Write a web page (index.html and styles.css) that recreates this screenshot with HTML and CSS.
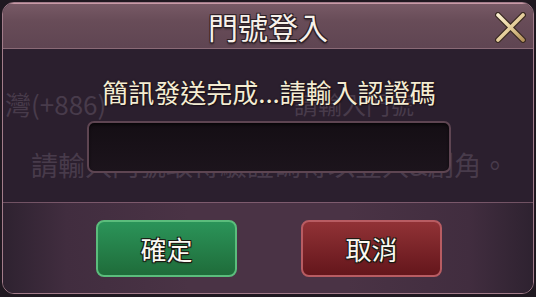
FILE: index.html
```html
<!DOCTYPE html>
<html lang="zh-Hant">
<head>
    <meta charset="UTF-8">
    <meta name="viewport" content="width=device-width, initial-scale=1.0">
    <title>門號登入</title>
    <link rel="stylesheet" href="styles.css">
</head>
<body>
    <div class="dialog">
        <div class="dialog-head">
            <span class="dialog-title">門號登入</span>
            <div class="close-btn">
                <svg width="31" height="31" viewBox="0 0 31 31">
                    <defs>
                        <linearGradient id="xg" x1="0" y1="0" x2="1" y2="1">
                            <stop offset="0" stop-color="#fbf0cf"/>
                            <stop offset="0.5" stop-color="#e6cf9c"/>
                            <stop offset="1" stop-color="#b7955c"/>
                        </linearGradient>
                    </defs>
                    <path d="M3 3 L28 28 M28 3 L3 28" stroke="#3a2a22" stroke-width="6" stroke-linecap="round"/>
                    <path d="M3 3 L28 28 M28 3 L3 28" stroke="url(#xg)" stroke-width="3.6" stroke-linecap="round"/>
                </svg>
            </div>
        </div>
        <div class="dialog-body">
            <div class="ghost">
                <span class="ghost-code">台灣(+886)</span>
                <span class="ghost-phone">請輸入門號</span>
                <span class="ghost-hint">請輸入門號取得驗證碼得以登入&amp;創角。</span>
            </div>
            <div class="message">簡訊發送完成...請輸入認證碼</div>
            <input class="code-input" type="text">
        </div>
        <div class="dialog-foot">
            <button class="btn btn-ok">確定</button>
            <button class="btn btn-cancel">取消</button>
        </div>
    </div>
</body>
</html>
```
FILE: styles.css
```css
body {
    margin: 0;
    width: 536px; height: 297px;
    background: #1f1820;
    font-family: "Noto Sans CJK TC", "Noto Sans", sans-serif;
    overflow: hidden;
}
.dialog {
    margin: 2px;
    width: 530px; height: 290px;
    border: 1px solid #a27c8a;
    border-radius: 12px;
    overflow: hidden;
    display: flex; flex-direction: column;
}
.dialog-head {
    height: 45px;
    position: relative;
    display: flex; align-items: center; justify-content: center;
    background: linear-gradient(180deg, #785a66, #684c58 40%, #5f4552);
    border-bottom: 1px solid #8a6a76;
    box-shadow: inset 0 1px 0 #c89aa6;
}
.dialog-title {
    font-size: 30px; line-height: 34px;
    color: #f7f1ea;
    margin-top: 1px;
    text-shadow: -1px -1px 0 #2d2026, 1px -1px 0 #2d2026, -1px 1px 0 #2d2026, 1px 1px 0 #2d2026, 0 2px 2px #2d2026;
}
.close-btn {
    position: absolute;
    top: 9px; right: 7px;
    width: 31px; height: 31px;
}
.dialog-body {
    height: 153px;
    position: relative;
    background: #2b1f2e;
    display: flex; flex-direction: column; align-items: center;
}
.ghost {
    position: absolute; inset: 0;
    color: #483b4b;
}
.ghost span { position: absolute; white-space: nowrap; }
.ghost-code { font-size: 26px; line-height: 30px; top: 40px; left: -24px; }
.ghost-phone { font-size: 24px; line-height: 28px; top: 41px; left: 291px; }
.ghost-hint { font-size: 27px; line-height: 32px; top: 100px; left: 28px; }
.message {
    position: relative;
    font-size: 26px; line-height: 30px;
    margin-top: 28px;
    margin-left: 2px;
    color: #f4ecd2;
    text-shadow: 0 0 2px #1a1018, 1px 1px 1px #1a1018;
}
.code-input {
    position: relative;
    box-sizing: border-box;
    margin-top: 14px;
    margin-left: 2px;
    width: 364px; height: 52px;
    background: linear-gradient(180deg, #140e14, #1c141c);
    border: 2px solid #5e4552;
    border-radius: 7px;
    box-shadow: inset 0 2px 3px rgba(0,0,0,0.6);
    outline: none;
}
.dialog-foot {
    flex: 1;
    display: flex; justify-content: center; align-items: flex-start;
    gap: 64px;
    padding-top: 18px;
    padding-left: 2px;
    background: linear-gradient(90deg, #2e2230 0%, #412d3f 12%, #4a3345 35%, #4a3345 65%, #412d3f 88%, #2e2230 100%);
    box-shadow: inset 0 1px 0 rgba(190,140,160,0.45);
}
.btn {
    width: 141px; height: 57px;
    border-radius: 8px;
    font-family: inherit;
    font-size: 26px; line-height: 30px;
    color: #fbf8f2;
    padding: 0;
    text-shadow: -1px -1px 0 #1a1a12, 1px -1px 0 #1a1a12, -1px 1px 0 #1a1a12, 1px 1px 0 #1a1a12, 0 1px 2px #1a1a12;
}
.btn-ok {
    background: linear-gradient(180deg, #2b9459, #1f6c3a);
    border: 2px solid #5bbd7c;
}
.btn-cancel {
    background: linear-gradient(180deg, #913236, #64161b);
    border: 2px solid #b85c62;
}
```
